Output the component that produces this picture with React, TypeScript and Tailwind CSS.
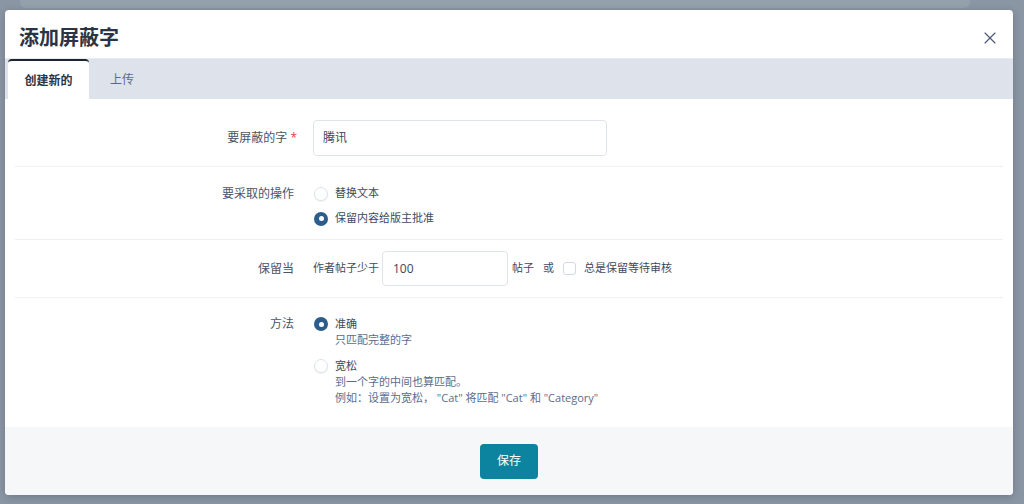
import React from 'react';
import { X } from 'lucide-react';

const font = { fontFamily: '"Open Sans", "Noto Sans CJK SC", sans-serif' };

const Radio = ({ checked }: { checked?: boolean }) =>
  checked ? (
    <span className="flex h-[14px] w-[14px] shrink-0 items-center justify-center rounded-full bg-[#2d5d8b]">
      <span className="block h-[5px] w-[5px] rounded-full bg-white" />
    </span>
  ) : (
    <span className="block h-[14px] w-[14px] shrink-0 rounded-full border border-[#dde2e9] bg-white shadow-[0_1px_1px_rgba(0,0,0,0.06)]" />
  );

const App = () => {
  return (
    <div className="relative h-[504px] w-[1024px] overflow-hidden bg-[#8b96a5]" style={font}>
      {/* page behind the overlay */}
      <div className="absolute left-[20px] top-0 h-[8px] w-[950px] rounded-b-md bg-[#95a0ad]" />

      <div className="relative ml-[5px] mt-[10px] flex h-[485px] w-[1008px] flex-col overflow-hidden rounded-[4px] bg-white shadow-[0_2px_8px_rgba(0,0,0,0.2)]">
        {/* Header */}
        <div className="flex h-[49px] items-center justify-between border-b border-[#e8ebf0] pl-[14px] pr-[13px] pt-[7px]">
          <h2 className="text-[20px] font-bold text-[#2b3445]">添加屏蔽字</h2>
          <X className="h-[20px] w-[20px] text-[#4b5a78]" strokeWidth={1.4} />
        </div>

        {/* Tabs */}
        <div className="flex h-[40px] items-end bg-[#dde2eb] pl-[3px]">
          <div className="flex h-[40px] w-[81px] items-center justify-center rounded-t-[4px] border-t-2 border-[#1e2532] bg-white pt-[2px] text-[12px] font-semibold text-[#2b3445]">
            创建新的
          </div>
          <div className="flex h-[40px] items-center px-[21px] pt-[2px] text-[12px] text-[#5b6b87]">上传</div>
        </div>

        {/* Form */}
        <div className="flex-1 px-[10px]">
          <div className="flex items-center border-b border-[#eef0f3] pb-[10px] pt-[21px]">
            <div className="w-[282px] text-right text-[12px] text-[#4a5568]">
              要屏蔽的字 <span className="text-[#e53e3e]">*</span>
            </div>
            <div className="ml-[16px] flex h-[36px] w-[294px] items-center rounded-[4px] border border-[#dfe3ea] px-[9px] text-[12px] text-[#3b4659]">
              腾讯
            </div>
          </div>

          <div className="flex items-start border-b border-[#eef0f3] pb-[8px] pt-[14px]">
            <div className="flex h-[25px] w-[279px] items-center justify-end text-[12px] text-[#4a5568]">
              要采取的操作
            </div>
            <div className="ml-[20px] flex flex-col text-[11px] text-[#3d4a5e]">
              <div className="flex h-[25px] items-center gap-[7px]">
                <Radio />
                替换文本
              </div>
              <div className="flex h-[25px] items-center gap-[7px]">
                <Radio checked />
                保留内容给版主批准
              </div>
            </div>
          </div>

          <div className="flex items-center border-b border-[#eef0f3] pb-[11px] pt-[11px]">
            <div className="w-[279px] text-right text-[12px] text-[#4a5568]">保留当</div>
            <div className="ml-[19px] flex items-center text-[11px] text-[#3d4a5e]">
              <span>作者帖子少于</span>
              <div className="ml-[3px] flex h-[35px] w-[126px] items-center rounded-[4px] border border-[#dfe3ea] px-[10px] text-[12px] text-[#3b4659]">
                100
              </div>
              <span className="ml-[4px]">帖子</span>
              <span className="ml-[9px]">或</span>
              <span className="ml-[9px] block h-[13px] w-[13px] rounded-[3px] border border-[#d3d9e1] bg-white" />
              <span className="ml-[8px]">总是保留等待审核</span>
            </div>
          </div>

          <div className="flex items-start pb-[18px] pt-[18px]">
            <div className="flex h-[16px] w-[279px] items-center justify-end text-[12px] text-[#4a5568]">方法</div>
            <div className="ml-[20px] flex flex-col gap-[10px] text-[11px] leading-[16px]">
              <div className="flex items-start gap-[7px]">
                <div className="mt-[1px]">
                  <Radio checked />
                </div>
                <div>
                  <div className="text-[#3d4a5e]">准确</div>
                  <div className="text-[#5b6c8c]">只匹配完整的字</div>
                </div>
              </div>
              <div className="flex items-start gap-[7px]">
                <div className="mt-[1px]">
                  <Radio />
                </div>
                <div>
                  <div className="text-[#3d4a5e]">宽松</div>
                  <div className="text-[#5b6c8c]">到一个字的中间也算匹配。</div>
                  <div className="text-[#5b6c8c]">例如：设置为宽松， "Cat" 将匹配 "Cat" 和 "Category"</div>
                </div>
              </div>
            </div>
          </div>
        </div>

        {/* Footer */}
        <div className="flex h-[68px] items-center justify-center bg-[#f5f7f9]">
          <button className="h-[35px] w-[58px] rounded-[4px] bg-[#0d849f] text-[12px] text-white">保存</button>
        </div>
      </div>
    </div>
  );
};

export default App;
